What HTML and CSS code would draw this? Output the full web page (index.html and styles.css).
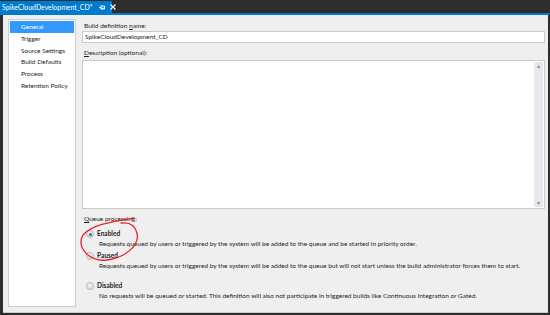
FILE: index.html
```html
<!DOCTYPE html>
<html lang="en">
<head>
  <meta charset="UTF-8">
  <title>SpikeCloudDevelopment_CD</title>
  <link rel="stylesheet" href="styles.css">
</head>
<body>
  <div class="window">
    <div class="tabbar">
      <div class="tab">
        <span class="tab-title">SpikeCloudDevelopment_CD*</span>
        <span class="tab-pin">
          <svg width="7" height="5" viewBox="0 0 7 5"><path d="M0 2.5h2M2 0.5v4M2 1h3.5v3H2M2 3.2h3.5" fill="none" stroke="#fff" stroke-width="0.9"/></svg>
        </span>
        <span class="tab-close">
          <svg width="6" height="6" viewBox="0 0 6 6"><path d="M0.5 0.5l5 5M5.5 0.5l-5 5" stroke="#fff" stroke-width="1.1"/></svg>
        </span>
      </div>
    </div>
    <div class="tabline"></div>

    <div class="main">
      <ul class="nav">
        <li class="nav-item selected">General</li>
        <li class="nav-item">Trigger</li>
        <li class="nav-item">Source Settings</li>
        <li class="nav-item">Build Defaults</li>
        <li class="nav-item">Process</li>
        <li class="nav-item">Retention Policy</li>
      </ul>

      <div class="content">
        <label class="field-label">Build definition <u>n</u>ame:</label>
        <div class="textbox">SpikeCloudDevelopment_CD</div>

        <label class="field-label"><u>D</u>escription (optional):</label>
        <div class="textarea">
          <div class="scrollbar">
            <span class="arrow">&#9652;</span>
            <span class="arrow">&#9662;</span>
          </div>
        </div>

        <label class="field-label queue-label"><u>Q</u>ueue processing:</label>

        <div class="option">
          <span class="radio checked"></span>
          <div class="option-text">
            <div class="option-name">Enabled</div>
            <div class="option-desc">Requests queued by users or triggered by the system will be added to the queue and be started in priority order.</div>
          </div>
        </div>
        <div class="option">
          <span class="radio"></span>
          <div class="option-text">
            <div class="option-name">Paused</div>
            <div class="option-desc">Requests queued by users or triggered by the system will be added to the queue but will not start unless the build administrator forces them to start.</div>
          </div>
        </div>
        <div class="option option-last">
          <span class="radio"></span>
          <div class="option-text">
            <div class="option-name">Disabled</div>
            <div class="option-desc">No requests will be queued or started. This definition will also not participate in triggered builds like Continuous Integration or Gated.</div>
          </div>
        </div>
      </div>
    </div>

    <svg class="annotation" width="550" height="315" viewBox="0 0 550 315">
      <path d="M134 218 C116 221 92 224 83 235 C76 248 90 262 107 260 C124 258 140 246 137 233 C135 225 129 222 121 223" fill="none" stroke="#e3262a" stroke-width="1.3" stroke-linecap="round"/>
    </svg>
  </div>
</body>
</html>
```

FILE: styles.css
```css
html, body {
  margin: 0;
  padding: 0;
}

body {
  width: 550px;
  height: 315px;
  overflow: hidden;
  font-family: 'Lato', 'Open Sans', sans-serif;
  font-size: 6.5px;
  color: #1e1e1e;
  background: #2d2d30;
}

.window {
  position: relative;
  width: 550px;
  height: 315px;
  display: flex;
  flex-direction: column;
}

/* Document tab */
.tabbar {
  height: 13px;
  background: #2d2d30;
  display: flex;
  align-items: flex-end;
}

.tab {
  width: 112px;
  height: 12px;
  background: #007acc;
  color: #fff;
  display: flex;
  align-items: center;
  padding-left: 2px;
  box-sizing: border-box;
}

.tab-title {
  font-size: 6.9px;
}

.tab-pin {
  margin-left: 6px;
  display: flex;
}

.tab-close {
  margin-left: 4px;
  display: flex;
}

.tabline {
  height: 2px;
  background: #007acc;
}

/* Body */
.main {
  flex: 1;
  display: flex;
  background: #efeff0;
  margin-left: 3px;
  margin-right: 2px;
  margin-bottom: 2px;
  border-bottom: 1px solid #c9c9cc;
}

.nav {
  list-style: none;
  margin: 4px 0 5px 5px;
  padding: 1px;
  width: 64px;
  flex-shrink: 0;
  background: #fff;
  border: 1px solid #cfcfd2;
}

.nav-item {
  height: 11.8px;
  line-height: 11.8px;
  padding-left: 11px;
  white-space: nowrap;
}

.nav-item.selected {
  background: #3399ff;
  color: #fff;
}

.content {
  flex: 1;
  min-width: 0;
  display: flex;
  flex-direction: column;
  padding: 5px 3px 0 6px;
}

.field-label {
  height: 11px;
  line-height: 11px;
  padding-left: 2px;
}

.textbox {
  height: 10px;
  line-height: 10px;
  background: #fff;
  border: 1px solid #cacacd;
  padding-left: 2px;
  margin-bottom: 4px;
}

.textarea {
  height: 147px;
  margin-top: 2px;
  background: #fff;
  border: 1px solid #cacacd;
  display: flex;
  justify-content: flex-end;
}

.scrollbar {
  width: 9px;
  margin: 1px;
  background: #e8e8ec;
  display: flex;
  flex-direction: column;
  justify-content: space-between;
  align-items: center;
  color: #868686;
  font-size: 6px;
  line-height: 8px;
}

.queue-label {
  margin-top: 4px;
  margin-bottom: 5px;
}

.option {
  display: flex;
  align-items: flex-start;
  padding-left: 4px;
  margin-bottom: 2px;
}

.option-last {
  margin-top: 8px;
}

.radio {
  width: 6px;
  height: 6px;
  border-radius: 50%;
  border: 1px solid #b4b4b4;
  background: linear-gradient(#f4f4f4, #dcdcdc);
  margin-top: 1px;
  margin-right: 3px;
  position: relative;
  flex-shrink: 0;
}

.radio.checked::after {
  content: "";
  position: absolute;
  left: 1.5px;
  top: 1.5px;
  width: 3px;
  height: 3px;
  border-radius: 50%;
  background: #2b6fbf;
}

.option-name {
  font-weight: 700;
  line-height: 10px;
}

.option-desc {
  line-height: 10px;
  padding-left: 2px;
  white-space: nowrap;
}

.annotation {
  position: absolute;
  left: 0;
  top: 0;
  pointer-events: none;
}
```
